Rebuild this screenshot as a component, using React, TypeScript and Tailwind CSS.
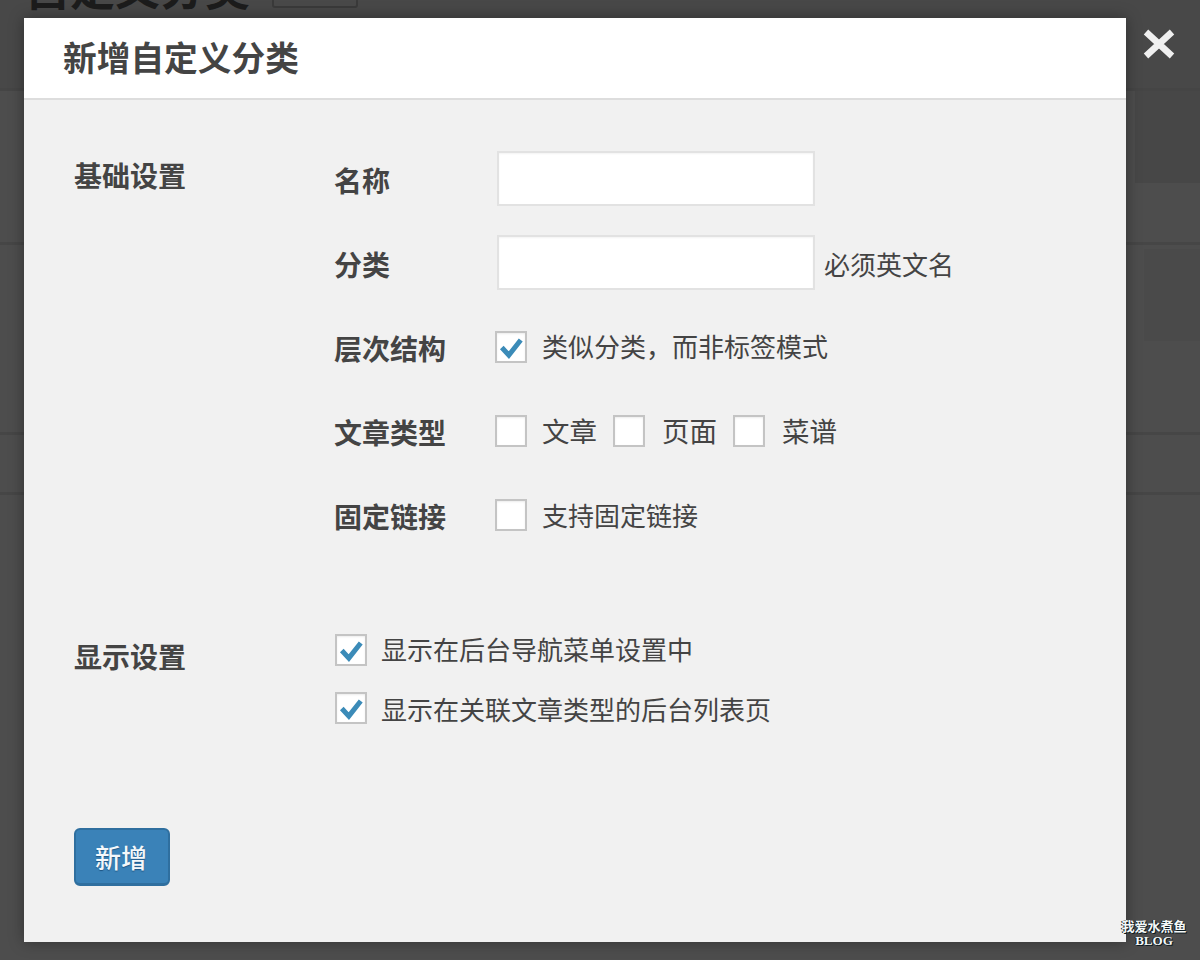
const FONT = "font-['Noto_Sans_CJK_SC','Liberation_Sans',sans-serif]";

function Check({ checked = false }: { checked?: boolean }) {
  return (
    <span className="flex h-8 w-8 shrink-0 items-center justify-center border-2 border-[#c4c4c4] bg-white shadow-[inset_0_1px_2px_rgba(0,0,0,0.08)]">
      {checked && (
        <svg viewBox="0 0 24 24" className="h-[26px] w-[26px]" fill="none">
          <path d="M3.5 12.5 L10 19.5 L21 5.5" stroke="#3b8bb8" strokeWidth="4.6" />
        </svg>
      )}
    </span>
  );
}

function Row({ label, low = false, children }: { label: string; low?: boolean; children: React.ReactNode }) {
  return (
    <div className="flex h-[84px] items-center">
      <div className={`w-[161px] text-[28px] font-bold leading-10 text-[#444] ${low ? 'pt-[4px]' : 'pt-[2px]'}`}>{label}</div>
      <div className="flex items-center text-[26px] leading-9 text-[#444]">{children}</div>
    </div>
  );
}

function TextBox() {
  return <input type="text" className="ml-[2px] h-[55px] w-[318px] border-2 border-[#e2e2e2] bg-white shadow-[inset_0_1px_2px_rgba(0,0,0,0.05)] outline-none" />;
}

export default function App() {
  return (
    <div className={`${FONT} relative h-[960px] w-[1200px] overflow-hidden bg-[#4d4d4d]`}>
      {/* page behind the overlay */}
      <div className="flex h-[91px] items-start border-b-[3px] border-[#454545] bg-[#484848] pl-[25px]">
        <div className="mt-[-35px] text-[45px] font-bold leading-[44px] text-[#1c1c1c]">自定义分类</div>
        <div className="ml-[22px] mt-[-30px] h-[38px] w-[86px] rounded-[3px] border-2 border-[#3a3a3a] bg-[#494949]" />
      </div>
      <div className="ml-[1135px] h-[92px] bg-[#474747]" />
      <div className="h-[62px] border-b-[3px] border-[#464646] bg-[#4d4d4d]" />
      <div className="ml-[1144px] mt-[4px] h-[92px] bg-[#4a4a4a]" />
      <div className="h-[94px] border-b-[3px] border-[#464646]" />
      <div className="h-[60px] border-b-[3px] border-[#464646]" />

      {/* close */}
      <svg viewBox="0 0 32 28" className="absolute left-[1143px] top-[25px] h-[38px] w-[32px]" fill="none">
        <path d="M3 2 L29 26 M29 2 L3 26" stroke="#f0f0f0" strokeWidth="6.5" />
      </svg>

      {/* modal */}
      <div className="absolute left-[24px] top-[18px] flex h-[924px] w-[1102px] flex-col bg-[#f1f1f1] shadow-[0_0_14px_rgba(0,0,0,0.35)]">
        <div className="flex h-[82px] shrink-0 items-center border-b-2 border-[#dddddd] bg-white pb-[2px] pl-[39px] text-[33.7px] font-bold text-[#444]">
          新增自定义分类
        </div>
        <div className="pl-[50px] pt-[36px]">
          <div className="flex">
            <div className="w-[260px] pt-[19px] text-[28px] font-bold leading-10 text-[#444]">基础设置</div>
            <div>
              <Row label="名称" low><TextBox /></Row>
              <div className="mb-px">
                <Row label="分类" low>
                  <TextBox />
                  <span className="ml-[9px] pt-[4px]">必须英文名</span>
                </Row>
              </div>
              <Row label="层次结构">
                <Check checked />
                <span className="ml-[15px] -mt-[2px]">类似分类，而非标签模式</span>
              </Row>
              <Row label="文章类型">
                <Check />
                <span className="ml-[15px] -mt-[2px] text-[27.5px]">文章</span>
                <span className="ml-[16px]"><Check /></span>
                <span className="ml-[17px] -mt-[2px] text-[27.5px]">页面</span>
                <span className="ml-[16px]"><Check /></span>
                <span className="ml-[17px] -mt-[2px] text-[27.5px]">菜谱</span>
              </Row>
              <Row label="固定链接">
                <Check />
                <span className="ml-[15px]">支持固定链接</span>
              </Row>
            </div>
          </div>

          <div className="mt-[63px] flex">
            <div className="w-[260px] pt-[16px] text-[28px] font-bold leading-10 text-[#444]">显示设置</div>
            <div className="text-[26px] leading-9 text-[#444]">
              <div className="flex h-[60px] items-center">
                <span className="ml-px"><Check checked /></span>
                <span className="ml-[14px] -mt-[2px]">显示在后台导航菜单设置中</span>
              </div>
              <div className="flex h-[60px] items-center">
                <span className="ml-px -mt-[4px]"><Check checked /></span>
                <span className="ml-[14px] -mt-[2px]">显示在关联文章类型的后台列表页</span>
              </div>
            </div>
          </div>

          <button className="mt-[88px] flex h-[58px] w-[96px] items-center justify-center rounded-[6px] border-2 border-[#2f6f9f] border-b-[3px] bg-[#3a82b8] pr-[2px] text-[26px] font-medium text-[#f4f8fb] [text-shadow:0_1px_1px_rgba(0,40,80,0.5)]">
            新增
          </button>
        </div>
      </div>

      {/* watermark */}
      <div className="absolute left-[1120px] top-[918px] flex w-[68px] flex-col items-center text-[#f4f8f8] [text-shadow:1px_1px_0_#0c1a20,-1px_0_0_#0c1a20]">
        <div className="text-[13px] font-bold leading-[16px]">我爱水煮鱼</div>
        <div className="mt-px font-['Liberation_Serif',serif] text-[13px] font-bold leading-[12px]">BLOG</div>
      </div>
    </div>
  );
}
